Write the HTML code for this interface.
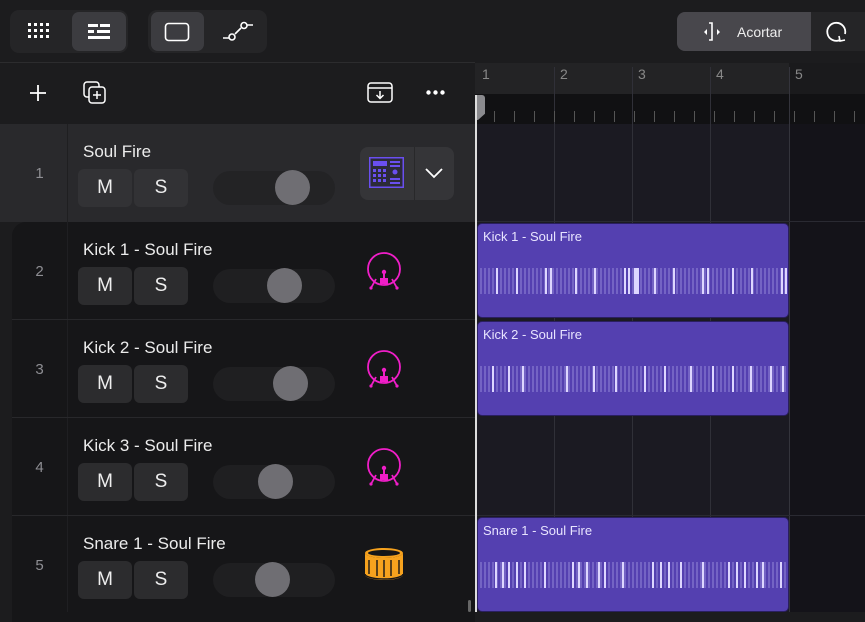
<!DOCTYPE html><html><head><style>
*{margin:0;padding:0;box-sizing:border-box}
html,body{width:865px;height:612px}
body{background:#1c1c1e;font-family:"Liberation Sans",sans-serif;color:#fff;position:relative;overflow:hidden}
svg{display:block}
.a{position:absolute}
.seg{background:#252527;border-radius:9px}
.on{background:#3c3c40;border-radius:7px}
.num{color:#8e8e93;font-size:15px;left:6px;width:67px;text-align:center}
.name{font-size:17px;color:#ececec}
.btn{width:54px;height:38px;background:#2c2c2e;border-radius:6px;font-size:19px;text-align:center;line-height:38px;color:#eee}
.sl{width:122px;height:34px;border-radius:17px;background:#1f1f21}
.knob{width:35px;height:35px;border-radius:50%;background:#6f6e73;top:-1px}
.reg{background:#5440b0;border-radius:5px;border:1px solid #2a1f60;overflow:hidden}
.reg .t{position:absolute;left:5px;top:5px;font-size:13px;color:#e8e4ff}
.wave{position:absolute;left:2px;right:2px;top:44px;height:26px;background:repeating-linear-gradient(90deg,#7464c4 0 2px,transparent 2px 4px)}
.wave i{position:absolute;top:0;height:26px;width:2px;background:#ddd6ff}
</style></head><body>
<div class="a seg" style="left:10px;top:10px;width:118px;height:43px"></div>
<div class="a on" style="left:72px;top:12px;width:54px;height:39px"></div>
<svg class="a" style="left:28px;top:23px" width="22" height="17"><g fill="#fff"><rect x="0" y="0" width="3" height="3"/><rect x="6" y="0" width="3" height="3"/><rect x="12" y="0" width="3" height="3"/><rect x="18" y="0" width="3" height="3"/><rect x="0" y="6" width="3" height="3"/><rect x="6" y="6" width="3" height="3"/><rect x="12" y="6" width="3" height="3"/><rect x="18" y="6" width="3" height="3"/><rect x="0" y="12" width="3" height="3"/><rect x="6" y="12" width="3" height="3"/><rect x="12" y="12" width="3" height="3"/><rect x="18" y="12" width="3" height="3"/></g></svg>
<svg class="a" style="left:88px;top:24px" width="23" height="16"><g fill="#fff"><rect x="0" y="0" width="10" height="3"/><rect x="12" y="0" width="10" height="3"/><rect x="0" y="6" width="6" height="3"/><rect x="9" y="6" width="13" height="3"/><rect x="0" y="12" width="22" height="3"/></g></svg>
<div class="a seg" style="left:148px;top:10px;width:119px;height:43px"></div>
<div class="a on" style="left:151px;top:12px;width:53px;height:39px"></div>
<svg class="a" style="left:164px;top:22px" width="27" height="20"><rect x="1.5" y="1.5" width="23" height="17" rx="3" fill="none" stroke="#fff" stroke-width="1.6"/></svg>
<svg class="a" style="left:222px;top:20px" width="32" height="22"><path d="M1 18H7M13 14L19 8M25 5H31" stroke="#fff" stroke-width="1.6" fill="none"/><circle cx="10" cy="17" r="3" fill="none" stroke="#fff" stroke-width="1.6"/><circle cx="22" cy="5.5" r="3" fill="none" stroke="#fff" stroke-width="1.6"/></svg>
<div class="a" style="left:677px;top:12px;width:188px;height:39px;background:#252527;border-radius:8px 0 0 8px"></div>
<div class="a" style="left:677px;top:12px;width:134px;height:39px;background:#48474c;border-radius:8px 0 0 8px"></div>
<svg class="a" style="left:703px;top:22px" width="20" height="20"><path d="M6 1H9V18H6" stroke="#fff" stroke-width="1.6" fill="none"/><path d="M1 10L4 7V13Z M14 7L17 10L14 13Z" fill="#fff"/></svg>
<div class="a" style="left:737px;top:24px;font-size:14px;color:#eee">Acortar</div>
<svg class="a" style="left:825px;top:21px" width="24" height="22"><path d="M15 19A9 9 0 1 1 20 13" stroke="#fff" stroke-width="1.8" fill="none"/><path d="M14 15L15 20L20 19" stroke="#fff" stroke-width="1.6" fill="none"/></svg>
<div class="a" style="left:0;top:62px;width:475px;height:1px;background:#2c2c2e"></div>
<svg class="a" style="left:29px;top:84px" width="18" height="18"><path d="M9 1V17M1 9H17" stroke="#fff" stroke-width="1.8"/></svg>
<svg class="a" style="left:83px;top:81px" width="25" height="24"><rect x="1" y="1" width="15" height="15" rx="3" fill="none" stroke="#fff" stroke-width="1.5"/><rect x="6" y="6" width="16" height="16" rx="3" fill="#1c1c1e" stroke="#fff" stroke-width="1.5"/><path d="M14 10V18M10 14H18" stroke="#fff" stroke-width="1.5"/></svg>
<svg class="a" style="left:367px;top:82px" width="27" height="22"><rect x="1" y="1" width="24" height="19" rx="3" fill="none" stroke="#fff" stroke-width="1.5"/><path d="M1 6H25M13 9V16M9.5 13L13 16.5L16.5 13" stroke="#fff" stroke-width="1.5" fill="none"/></svg>
<svg class="a" style="left:426px;top:90px" width="20" height="5"><circle cx="2.5" cy="2.5" r="2.2" fill="#fff"/><circle cx="9.5" cy="2.5" r="2.2" fill="#fff"/><circle cx="16.5" cy="2.5" r="2.2" fill="#fff"/></svg>
<div class="a" style="left:0;top:124px;width:475px;height:98px;background:#29292c"></div>
<div class="a" style="left:67px;top:124px;width:1px;height:98px;background:#1f1f21"></div>
<div class="a num" style="top:165px">1</div>
<div class="a name" style="left:83px;top:142px">Soul Fire</div>
<div class="a btn" style="left:78px;top:169px;background:#323235">M</div><div class="a btn" style="left:134px;top:169px;background:#323235">S</div>
<div class="a sl" style="left:213px;top:171px;background:#232325"><div class="a knob" style="left:62px"></div></div>
<div class="a" style="left:360px;top:147px;width:94px;height:53px;background:#353538;border-radius:8px"></div>
<div class="a" style="left:414px;top:147px;width:1px;height:53px;background:#28282a"></div>
<svg class="a" style="left:369px;top:157px" width="36" height="32"><rect x="0" y="0" width="35" height="31" fill="#6a4ff0"/><rect x="1.5" y="1.5" width="32" height="28" fill="#2c2b3a"/><rect x="4" y="4" width="14" height="5" fill="#6a4ff0"/><g fill="#6a4ff0"><rect x="4" y="12" width="3" height="3"/><rect x="9" y="12" width="3" height="3"/><rect x="14" y="12" width="3" height="3"/><rect x="4" y="17" width="3" height="3"/><rect x="9" y="17" width="3" height="3"/><rect x="14" y="17" width="3" height="3"/><rect x="4" y="22" width="3" height="3"/><rect x="9" y="22" width="3" height="3"/><rect x="14" y="22" width="3" height="3"/><rect x="21" y="4" width="10" height="2"/><rect x="21" y="8" width="10" height="2"/><circle cx="26" cy="15" r="2.5"/><rect x="21" y="21" width="10" height="2"/><rect x="21" y="25" width="10" height="2"/></g></svg>
<svg class="a" style="left:424px;top:166px" width="20" height="14"><path d="M2 3L10 11L18 3" stroke="#fff" stroke-width="1.8" fill="none"/></svg>
<div class="a" style="left:12px;top:222px;width:463px;height:400px;background:#161618;border-radius:14px 0 0 0"></div>
<div class="a" style="left:67px;top:222px;width:1px;height:390px;background:#1f1f22"></div>
<div class="a" style="left:12px;top:319px;width:463px;height:1px;background:#28282b"></div>
<div class="a" style="left:12px;top:417px;width:463px;height:1px;background:#28282b"></div>
<div class="a" style="left:12px;top:515px;width:463px;height:1px;background:#28282b"></div>
<div class="a num" style="top:263px">2</div>
<div class="a num" style="top:361px">3</div>
<div class="a num" style="top:459px">4</div>
<div class="a num" style="top:557px">5</div>
<div class="a name" style="left:83px;top:240px">Kick 1 - Soul Fire</div>
<div class="a name" style="left:83px;top:338px">Kick 2 - Soul Fire</div>
<div class="a name" style="left:83px;top:436px">Kick 3 - Soul Fire</div>
<div class="a name" style="left:83px;top:534px">Snare 1 - Soul Fire</div>
<div class="a btn" style="left:78px;top:267px">M</div><div class="a btn" style="left:134px;top:267px">S</div>
<div class="a btn" style="left:78px;top:365px">M</div><div class="a btn" style="left:134px;top:365px">S</div>
<div class="a btn" style="left:78px;top:463px">M</div><div class="a btn" style="left:134px;top:463px">S</div>
<div class="a btn" style="left:78px;top:561px">M</div><div class="a btn" style="left:134px;top:561px">S</div>
<div class="a sl" style="left:213px;top:269px"><div class="a knob" style="left:54px"></div></div>
<div class="a sl" style="left:213px;top:367px"><div class="a knob" style="left:60px"></div></div>
<div class="a sl" style="left:213px;top:465px"><div class="a knob" style="left:45px"></div></div>
<div class="a sl" style="left:213px;top:563px"><div class="a knob" style="left:42px"></div></div>
<svg width="0" height="0" style="position:absolute"><defs><g id="kick"><circle cx="17" cy="17" r="16" fill="none" stroke="#f01ec8" stroke-width="1.8"/><circle cx="17" cy="20" r="2.2" fill="#f01ec8"/><rect x="16" y="20" width="2" height="8" fill="#f01ec8"/><rect x="13" y="26" width="8" height="6" fill="#f01ec8"/><path d="M9 27L4 36M25 27L30 36" stroke="#f01ec8" stroke-width="1.8"/><circle cx="4" cy="36" r="1.6" fill="#f01ec8"/><circle cx="30" cy="36" r="1.6" fill="#f01ec8"/></g></defs></svg>
<svg class="a" style="left:367px;top:252px" width="36" height="40"><use href="#kick"/></svg>
<svg class="a" style="left:367px;top:350px" width="36" height="40"><use href="#kick"/></svg>
<svg class="a" style="left:367px;top:448px" width="36" height="40"><use href="#kick"/></svg>
<svg class="a" style="left:363px;top:546px" width="44" height="38"><ellipse cx="21" cy="7" rx="19" ry="5" fill="#f6a21e"/><ellipse cx="21" cy="7" rx="16" ry="3" fill="#161618"/><path d="M2 7V29A19 5 0 0 0 40 29V7A19 5 0 0 1 2 7Z" fill="#f6a21e"/><path d="M6 14V28M14 14V30M21 14V31M28 14V30M36 14V28" stroke="#161618" stroke-width="1.4"/><path d="M2 28A19 5 0 0 0 40 28" stroke="#161618" stroke-width="1.4" fill="none"/></svg>
<div class="a" style="left:468px;top:600px;width:3px;height:12px;background:#666;border-radius:2px"></div>
<div class="a" style="left:475px;top:63px;width:390px;height:31px;background:#232325"></div>
<div class="a" style="left:789px;top:63px;width:76px;height:31px;background:#1a1a1c"></div>
<div class="a" style="left:475px;top:94px;width:390px;height:30px;background:#111113"></div>
<div class="a" style="left:475px;top:124px;width:390px;height:488px;background:#1b1a22"></div>
<div class="a" style="left:789px;top:124px;width:76px;height:488px;background:#141319"></div>
<div class="a" style="left:554px;top:67px;width:1px;height:545px;background:#303038"></div>
<div class="a" style="left:632px;top:67px;width:1px;height:545px;background:#303038"></div>
<div class="a" style="left:710px;top:67px;width:1px;height:545px;background:#303038"></div>
<div class="a" style="left:789px;top:67px;width:1px;height:545px;background:#34343c"></div>
<div class="a" style="left:475px;top:111px;width:390px;height:11px;background:repeating-linear-gradient(90deg,transparent 0 19px,#555 19px 20px)"></div>
<div class="a" style="left:475px;top:221px;width:390px;height:1px;background:#2a2a32"></div>
<div class="a" style="left:475px;top:515px;width:390px;height:1px;background:#2a2a32"></div>
<div class="a" style="left:482px;top:66px;font-size:14px;color:#888">1</div>
<div class="a" style="left:560px;top:66px;font-size:14px;color:#888">2</div>
<div class="a" style="left:638px;top:66px;font-size:14px;color:#888">3</div>
<div class="a" style="left:716px;top:66px;font-size:14px;color:#888">4</div>
<div class="a" style="left:795px;top:66px;font-size:14px;color:#888">5</div>
<div class="a" style="left:475px;top:95px;width:10px;height:25px;background:#8a8a8e;border-radius:0 3px 0 0;clip-path:polygon(0 0,100% 0,100% 75%,30% 100%,0 100%)"></div>
<div class="a" style="left:475px;top:95px;width:2px;height:517px;background:#ddd"></div>
<div class="a reg" style="left:477px;top:223px;width:312px;height:95px"><div class="t">Kick 1 - Soul Fire</div><div class="wave"><i style="left:16px"></i><i style="left:36px"></i><i style="left:65px"></i><i style="left:70px"></i><i style="left:95px"></i><i style="left:114px"></i><i style="left:144px"></i><i style="left:148px"></i><i style="left:154px;width:5px"></i><i style="left:174px"></i><i style="left:193px"></i><i style="left:222px"></i><i style="left:227px"></i><i style="left:252px"></i><i style="left:271px"></i><i style="left:301px"></i><i style="left:305px"></i></div></div>
<div class="a reg" style="left:477px;top:321px;width:312px;height:95px"><div class="t">Kick 2 - Soul Fire</div><div class="wave"><i style="left:12px"></i><i style="left:28px"></i><i style="left:42px"></i><i style="left:86px"></i><i style="left:113px"></i><i style="left:135px"></i><i style="left:164px"></i><i style="left:184px"></i><i style="left:210px"></i><i style="left:232px"></i><i style="left:252px"></i><i style="left:270px"></i><i style="left:290px"></i><i style="left:302px"></i></div></div>
<div class="a reg" style="left:477px;top:517px;width:312px;height:95px"><div class="t">Snare 1 - Soul Fire</div><div class="wave"><i style="left:15px"></i><i style="left:22px"></i><i style="left:28px"></i><i style="left:36px"></i><i style="left:44px"></i><i style="left:64px"></i><i style="left:92px"></i><i style="left:98px"></i><i style="left:106px"></i><i style="left:118px"></i><i style="left:124px"></i><i style="left:142px"></i><i style="left:172px"></i><i style="left:180px"></i><i style="left:188px"></i><i style="left:200px"></i><i style="left:222px"></i><i style="left:248px"></i><i style="left:256px"></i><i style="left:264px"></i><i style="left:276px"></i><i style="left:282px"></i><i style="left:300px"></i></div></div>
</body></html>
